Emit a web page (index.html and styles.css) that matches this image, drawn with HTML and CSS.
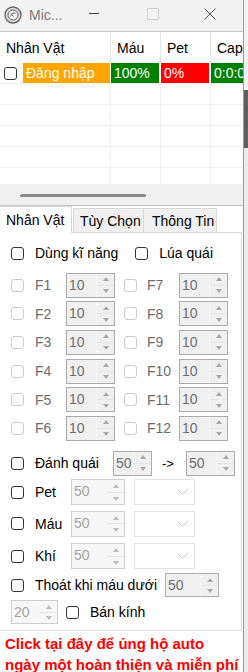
FILE: index.html
```html
<!DOCTYPE html>
<html lang="vi">
<head>
  <meta charset="UTF-8" />
  <title>Mic...</title>
  <link rel="stylesheet" href="styles.css">
</head>
<body>
  <div class="screen">
    <div class="win">
      <div class="titlebar">
        <svg class="app-icon" width="18" height="18" viewBox="0 0 18 18">
          <circle cx="9" cy="9" r="8" fill="#d8d8d8" stroke="#6a6a6a" stroke-width="1.4"/>
          <circle cx="9" cy="9" r="5" fill="#f4f4f4" stroke="#6a6a6a" stroke-width="1"/>
          <path d="M6.5 10.5c1-3 3-4 5-3M7 7.5l2.5 3" fill="none" stroke="#5a5a5a" stroke-width="1"/>
        </svg>
        <span class="title">Mic...</span>
        <span class="tb-btn tb-min"></span>
        <span class="tb-btn tb-max"></span>
        <svg class="tb-close" width="12" height="12" viewBox="0 0 12 12">
          <path d="M0.5 0.5L11.5 11.5M11.5 0.5L0.5 11.5" stroke="#555" stroke-width="1"/>
        </svg>
      </div>

      <div class="list">
        <div class="lv-head">
          <div class="c1">Nhân Vật</div>
          <div class="c2">Máu</div>
          <div class="c3">Pet</div>
          <div class="c4">Capt</div>
        </div>
        <div class="lv-row">
          <div class="c1 first-cell"><span class="chk lv-chk"></span><span class="cell-orange">Đăng nhập</span></div>
          <div class="c2 cell-green">100%</div>
          <div class="c3 cell-red">0%</div>
          <div class="c4 cell-green">0:0:0</div>
        </div>
        <div class="lv-row"><div class="c1"></div><div class="c2"></div><div class="c3"></div><div class="c4"></div></div>
        <div class="lv-row"><div class="c1"></div><div class="c2"></div><div class="c3"></div><div class="c4"></div></div>
        <div class="lv-row"><div class="c1"></div><div class="c2"></div><div class="c3"></div><div class="c4"></div></div>
        <div class="lv-row"><div class="c1"></div><div class="c2"></div><div class="c3"></div><div class="c4"></div></div>
        <div class="lv-row last"><div class="c1"></div><div class="c2"></div><div class="c3"></div><div class="c4"></div></div>
        <div class="hscroll"><div class="hthumb"></div></div>
      </div>

      <div class="tabs">
        <div class="tab active">Nhân Vật</div>
        <div class="tab">Tùy Chọn</div>
        <div class="tab">Thông Tin</div>
      </div>

      <div class="panel">
        <div class="row row-top">
          <span class="chk"></span><span class="lbl">Dùng kĩ năng</span>
          <span class="chk chk-lua"></span><span class="lbl">Lúa quái</span>
        </div>

        <div class="fgrid">
          <div class="frow">
            <span class="chk off"></span><span class="flbl">F1</span>
            <span class="spin"><span class="val">10</span><span class="btns"><i class="up"></i><i class="dn"></i></span></span>
            <span class="chk off chk-r"></span><span class="flbl flbl-r">F7</span>
            <span class="spin"><span class="val">10</span><span class="btns"><i class="up"></i><i class="dn"></i></span></span>
          </div>
          <div class="frow">
            <span class="chk off"></span><span class="flbl">F2</span>
            <span class="spin"><span class="val">10</span><span class="btns"><i class="up"></i><i class="dn"></i></span></span>
            <span class="chk off chk-r"></span><span class="flbl flbl-r">F8</span>
            <span class="spin"><span class="val">10</span><span class="btns"><i class="up"></i><i class="dn"></i></span></span>
          </div>
          <div class="frow">
            <span class="chk off"></span><span class="flbl">F3</span>
            <span class="spin"><span class="val">10</span><span class="btns"><i class="up"></i><i class="dn"></i></span></span>
            <span class="chk off chk-r"></span><span class="flbl flbl-r">F9</span>
            <span class="spin"><span class="val">10</span><span class="btns"><i class="up"></i><i class="dn"></i></span></span>
          </div>
          <div class="frow">
            <span class="chk off"></span><span class="flbl">F4</span>
            <span class="spin"><span class="val">10</span><span class="btns"><i class="up"></i><i class="dn"></i></span></span>
            <span class="chk off chk-r"></span><span class="flbl flbl-r">F10</span>
            <span class="spin"><span class="val">10</span><span class="btns"><i class="up"></i><i class="dn"></i></span></span>
          </div>
          <div class="frow">
            <span class="chk off"></span><span class="flbl">F5</span>
            <span class="spin"><span class="val">10</span><span class="btns"><i class="up"></i><i class="dn"></i></span></span>
            <span class="chk off chk-r"></span><span class="flbl flbl-r">F11</span>
            <span class="spin"><span class="val">10</span><span class="btns"><i class="up"></i><i class="dn"></i></span></span>
          </div>
          <div class="frow">
            <span class="chk off"></span><span class="flbl">F6</span>
            <span class="spin"><span class="val">10</span><span class="btns"><i class="up"></i><i class="dn"></i></span></span>
            <span class="chk off chk-r"></span><span class="flbl flbl-r">F12</span>
            <span class="spin"><span class="val">10</span><span class="btns"><i class="up"></i><i class="dn"></i></span></span>
          </div>
        </div>

        <div class="row row-danh">
          <span class="chk"></span><span class="lbl lbl-danh">Đánh quái</span>
          <span class="spin spin-sm"><span class="val">50</span><span class="btns"><i class="up"></i><i class="dn"></i></span></span>
          <span class="arrow">-&gt;</span>
          <span class="spin"><span class="val">50</span><span class="btns"><i class="up"></i><i class="dn"></i></span></span>
        </div>

        <div class="row row-pet">
          <span class="chk"></span><span class="lbl lbl-short">Pet</span>
          <span class="spin spin-light spin-md"><span class="val">50</span><span class="btns"><i class="up"></i><i class="dn"></i></span></span>
          <span class="combo"><svg width="11" height="6" viewBox="0 0 11 6"><path d="M0.5 0.5L5.5 5.5L10.5 0.5" fill="none" stroke="#c4c4c4" stroke-width="1"/></svg></span>
        </div>

        <div class="row row-mau">
          <span class="chk"></span><span class="lbl lbl-short">Máu</span>
          <span class="spin spin-light spin-md"><span class="val">50</span><span class="btns"><i class="up"></i><i class="dn"></i></span></span>
          <span class="combo"><svg width="11" height="6" viewBox="0 0 11 6"><path d="M0.5 0.5L5.5 5.5L10.5 0.5" fill="none" stroke="#c4c4c4" stroke-width="1"/></svg></span>
        </div>

        <div class="row row-khi">
          <span class="chk"></span><span class="lbl lbl-short">Khí</span>
          <span class="spin spin-light spin-md"><span class="val">50</span><span class="btns"><i class="up"></i><i class="dn"></i></span></span>
          <span class="combo"><svg width="11" height="6" viewBox="0 0 11 6"><path d="M0.5 0.5L5.5 5.5L10.5 0.5" fill="none" stroke="#c4c4c4" stroke-width="1"/></svg></span>
        </div>

        <div class="row row-thoat">
          <span class="chk"></span><span class="lbl lbl-thoat">Thoát khi máu dưới</span>
          <span class="spin spin-md spin-thoat"><span class="val">50</span><span class="btns"><i class="up"></i><i class="dn"></i></span></span>
        </div>

        <div class="row row-ban">
          <span class="spin spin-light spin-ban"><span class="val">20</span><span class="btns"><i class="up"></i><i class="dn"></i></span></span>
          <span class="chk chk-ban"></span><span class="lbl">Bán kính</span>
        </div>
      </div>

      <div class="donate">
        Click tại đây để ủng hộ auto<br>
        ngày một hoàn thiện và miễn phí
      </div>
    </div>

    <div class="edge">
      <div class="edge-top"></div>
      <div class="edge-thumb"></div>
      <div class="edge-rest"></div>
    </div>
  </div>
</body>
</html>
```

FILE: styles.css
```css
html, body {
  margin: 0;
  padding: 0;
  background: #ffffff;
}
body {
  font-family: "Liberation Sans", Arial, sans-serif;
  font-size: 14px;
  color: #000;
  width: 248px;
  height: 672px;
  overflow: hidden;
}
.screen {
  display: flex;
  width: 248px;
  height: 672px;
}
.win {
  width: 243px;
  height: 672px;
  display: flex;
  flex-direction: column;
  background: #fff;
  overflow: hidden;
}
.win > div {
  flex: none;
}

/* title bar */
.titlebar {
  height: 31px;
  border-bottom: 1px solid #c8c8c8;
  background: #f3f3f3;
  display: flex;
  align-items: center;
}
.app-icon {
  margin-left: 4px;
  margin-top: -2px;
}
.title {
  margin-left: 7px;
  color: #7a7a7a;
  font-size: 14px;
  margin-top: -2px;
}
.tb-btn {
  display: block;
}
.tb-min {
  margin-left: 27px;
  width: 10px;
  height: 1px;
  background: #444;
  margin-top: -4px;
}
.tb-max {
  margin-left: 48px;
  width: 10px;
  height: 10px;
  border: 1px solid #d0d0d0;
  border-radius: 1px;
  margin-top: -4px;
}
.tb-close {
  margin-left: 45px;
  margin-top: -4px;
}

/* list view */
.list {
  height: 174px;
  box-sizing: border-box;
  border-bottom: 1px solid #c4c4c4;
  display: flex;
  flex-direction: column;
  overflow: hidden;
}
.lv-head, .lv-row {
  display: flex;
  flex: none;
}
.lv-head {
  height: 31px;
  align-items: center;
}
.lv-head > div {
  height: 31px;
  line-height: 33px;
  padding-left: 6px;
  box-sizing: border-box;
  border-right: 1px solid #e5e5e5;
  white-space: nowrap;
  overflow: hidden;
}
.c1 { width: 111px; flex: none; }
.c2 { width: 50px; flex: none; }
.c3 { width: 50px; flex: none; }
.c4 { width: 32px; flex: none; }
.lv-head .c4 { border-right: none; }
.lv-row {
  height: 21px;
  border-bottom: 1px solid #f0f0f0;
  box-sizing: border-box;
}
.lv-row.last {
  height: 16px;
  border-bottom: none;
}
.lv-row > div {
  box-sizing: border-box;
  border-right: 1px solid #f0f0f0;
  color: #fff;
  line-height: 20px;
  padding-left: 3px;
  white-space: nowrap;
  overflow: hidden;
}
.lv-row > .c4 { border-right: none; }
.lv-row > .first-cell {
  display: flex;
  align-items: center;
  padding-left: 0;
  border-right: 1px solid #fff;
}
.lv-chk {
  margin-left: 4px;
  width: 12px;
  height: 14px;
}
.cell-orange {
  margin-left: 6px;
  background: #ffa500;
  height: 20px;
  flex: 1;
  padding-left: 3px;
}
.cell-green { background: #008000; }
.cell-red { background: #ff0000; }
.lv-row > .cell-green, .lv-row > .cell-red {
  border-right: 2px solid #fff;
}
.lv-row > .c4.cell-green { border-right: none; }
.hscroll {
  height: 22px;
  background: #f0f0f0;
  flex: none;
  display: flex;
  align-items: center;
}
.hthumb {
  margin-left: 20px;
  width: 126px;
  height: 3px;
  border-radius: 2px;
  background: #8a8a8a;
}

/* tabs */
.tabs {
  height: 26px;
  display: flex;
  align-items: flex-end;
}
.tab {
  height: 24px;
  line-height: 24px;
  box-sizing: border-box;
  border: 1px solid #d9d9d9;
  border-bottom: none;
  background: #f0f0f0;
  padding-left: 6px;
  margin-left: -1px;
  white-space: nowrap;
}
.tab:nth-child(2) { width: 71px; margin-left: 1px; }
.tab:nth-child(3) { width: 74px; padding-left: 8px; }
.tab.active {
  width: 72px;
  height: 27px;
  line-height: 26px;
  margin-left: 0;
  border-left: none;
  background: #fff;
  margin-bottom: -1px;
  position: relative;
}

/* tab page */
.panel {
  width: 242px;
  height: 399px;
  box-sizing: border-box;
  border: 1px solid #d9d9d9;
  border-left: none;
  padding-top: 7px;
  background: #fff;
}
.row {
  display: flex;
  align-items: center;
  padding-left: 11px;
}
.chk {
  display: block;
  flex: none;
  width: 11px;
  height: 11px;
  border: 1px solid #333;
  border-radius: 3px;
  background: #fff;
}
.chk.off {
  border-color: #cccccc;
}
.lbl {
  margin-left: 11px;
  white-space: nowrap;
  flex: none;
}
.row-top { height: 26px; }
.chk-lua { margin-left: 17px; }

.fgrid {
  margin-top: 5px;
}
.frow {
  height: 28.6px;
  display: flex;
  align-items: center;
  padding-left: 11px;
}
.flbl {
  width: 31px;
  margin-left: 11px;
  color: #6d6d6d;
}
.flbl-r {
  width: 32px;
  margin-left: 10px;
}
.chk-r { margin-left: 9px; }

/* numeric spin boxes */
.spin {
  display: flex;
  flex: none;
  width: 49px;
  height: 25px;
  box-sizing: border-box;
  border: 1px solid #ababab;
  background: #f0f0f0;
  color: #6d6d6d;
}
.spin .val {
  flex: 1;
  line-height: 22px;
  padding-left: 2px;
}
.btns {
  width: 17px;
  display: flex;
  flex-direction: column;
  border-left: 1px solid #f7f7f7;
}
.btns i {
  flex: 1;
  display: flex;
  align-items: center;
  justify-content: center;
}
.btns i.up { border-bottom: 1px solid #e6e6e6; }
.btns i.up::before {
  content: "";
  border-left: 3.5px solid transparent;
  border-right: 3.5px solid transparent;
  border-bottom: 4px solid #a8a8a8;
}
.btns i.dn::before {
  content: "";
  border-left: 3.5px solid transparent;
  border-right: 3.5px solid transparent;
  border-top: 4px solid #a8a8a8;
}
.spin-sm { width: 39px; }
.spin-md { width: 54px; height: 26px; }
.spin-light {
  border-color: #cfcfcf;
  background: #f7f7f7;
  color: #a6a6a6;
}
.spin-light .btns i.up::before { border-bottom-color: #bdbdbd; }
.spin-light .btns i.dn::before { border-top-color: #bdbdbd; }

.row-danh { height: 28px; margin-top: 6.7px; }
.lbl-danh { width: 78px; }
.arrow { margin-left: 10px; width: 24px; font-size: 13px; flex: none; }

.row-pet { height: 30px; }
.row-mau { height: 33px; }
.row-khi { height: 32px; }
.lbl-short { width: 36px; }
.combo {
  margin-left: 9px;
  flex: none;
  width: 61px;
  height: 26px;
  box-sizing: border-box;
  border: 1px solid #e3e3e3;
  background: #fff;
  display: flex;
  align-items: center;
  justify-content: flex-end;
  padding-right: 6px;
}

.row-thoat { height: 26px; }
.lbl-thoat { width: 130px; }
.spin-thoat { height: 24px; border-color: #adadad; }

.row-ban { height: 28px; }
.spin-ban { width: 47px; height: 24px; }
.chk-ban { margin-left: 8px; }

/* donate link */
.donate {
  padding: 2px 0 0 5px;
  color: #ff0000;
  font-weight: bold;
  font-size: 15px;
  line-height: 21px;
  white-space: nowrap;
}

/* clipped vertical scrollbar on the right */
.edge {
  width: 5px;
  height: 672px;
  box-sizing: border-box;
  border-left: 1px solid #9a9a9a;
  display: flex;
  flex-direction: column;
  background: #ececec;
}
.edge-top { height: 90px; background: #f3f3f3; }
.edge-thumb { height: 58px; background: #5e5e5e; }
.edge-rest { flex: 1; }
```
